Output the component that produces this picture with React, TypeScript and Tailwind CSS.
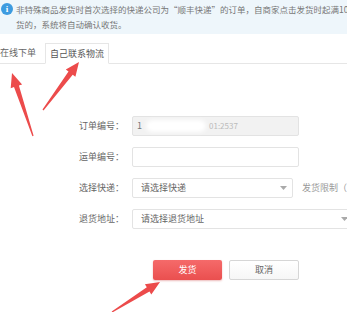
const FONT = { fontFamily: '"Noto Sans CJK SC", "Noto Sans", sans-serif' };

// tapered annotation arrow: thin at the tail, wide head at the tip
function Arrow({ from, to }: { from: [number, number]; to: [number, number] }) {
  const [x1, y1] = from;
  const [x2, y2] = to;
  const len = Math.hypot(x2 - x1, y2 - y1);
  const ux = (x2 - x1) / len;
  const uy = (y2 - y1) / len;
  const nx = -uy;
  const ny = ux;
  const headLen = 14;
  const bx = x2 - ux * headLen;
  const by = y2 - uy * headLen;
  const p = (x: number, y: number) => `${x.toFixed(1)},${y.toFixed(1)}`;
  const pts = [
    p(x1 + nx * 0.6, y1 + ny * 0.6),
    p(bx + nx * 2.6, by + ny * 2.6),
    p(bx + nx * 6, by + ny * 6),
    p(x2, y2),
    p(bx - nx * 6, by - ny * 6),
    p(bx - nx * 2.6, by - ny * 2.6),
    p(x1 - nx * 0.6, y1 - ny * 0.6),
  ].join(' ');
  return <polygon points={pts} fill="#ec4b4b" />;
}

function Caret() {
  return (
    <svg width="7" height="4" viewBox="0 0 7 4" className="shrink-0">
      <path d="M0 0h7L3.5 4z" fill="#aaa" />
    </svg>
  );
}

const LABEL = 'w-[125px] shrink-0 text-right pr-[1px] text-[9px] text-[#666]';
const BOX = 'h-[20px] border border-[#e3e3e3] rounded-[2px] flex items-center text-[9px]';

export default function App() {
  return (
    <div className="relative w-[347px] h-[312px] overflow-hidden bg-white" style={FONT}>
      {/* notice */}
      <div className="h-[34px] bg-[#eef6fb] flex pt-[2px] pl-[1px] overflow-hidden">
        <div className="w-[12px] h-[12px] rounded-full bg-[#3d9be0] text-white text-[9px] font-bold leading-[12px] text-center shrink-0 mt-[1px]" style={{ fontFamily: '"Liberation Serif", serif' }}>
          i
        </div>
        <div className="pl-[3px] text-[8.5px] leading-[15px] text-[#777] whitespace-nowrap">
          <div>非特殊商品发货时首次选择的快递公司为“顺丰快递”的订单，自商家点击发货时起满10天</div>
          <div>货的，系统将自动确认收货。</div>
        </div>
      </div>

      {/* tabs */}
      <div className="mt-[9px] flex h-[21px] border-b border-[#e6e6e6]">
        <div className="w-[45px] text-[9px] leading-[20px] text-[#666]">在线下单</div>
        <div className="w-[64px] -mb-px bg-white border border-[#e6e6e6] border-b-white text-[9px] leading-[20px] text-[#555] text-center">
          自己联系物流
        </div>
      </div>

      {/* form */}
      <div className="mt-[52px] flex flex-col gap-[11px]">
        <div className="flex items-center">
          <div className={LABEL}>订单编号：</div>
          <div className={`${BOX} ml-[7px] w-[167px] bg-[#f2f2f2] pl-[4px] text-[#777]`}>
            <span>1</span>
            <span className="ml-[4px] w-[60px] h-[12px] rounded-full bg-white blur-[2px]" />
            <span className="ml-[3px] text-[#bbb] text-[8px]">01:2537</span>
          </div>
        </div>
        <div className="flex items-center">
          <div className={LABEL}>运单编号：</div>
          <div className={`${BOX} ml-[7px] w-[167px] bg-white`} />
        </div>
        <div className="flex items-center">
          <div className={LABEL}>选择快递：</div>
          <div className={`${BOX} ml-[7px] w-[167px] bg-white pl-[8px] pr-[5px] justify-between text-[#666]`}>
            <span>请选择快递</span>
            <Caret />
          </div>
          <span className="ml-[9px] text-[9px] text-[#999] whitespace-nowrap">发货限制（</span>
        </div>
        <div className="flex items-center">
          <div className={LABEL}>退货地址：</div>
          <div className={`${BOX} ml-[7px] w-[222px] shrink-0 bg-white pl-[8px] pr-[5px] justify-between text-[#666]`}>
            <span>请选择退货地址</span>
            <Caret />
          </div>
        </div>
      </div>

      {/* buttons */}
      <div className="mt-[31px] flex gap-[7px] pl-[153px]">
        <button className="w-[69px] h-[20px] rounded-[2px] bg-gradient-to-b from-[#f56a6a] to-[#ea4f4f] shadow-[0_1px_2px_rgba(200,60,60,0.35)] text-white text-[9px]">
          发货
        </button>
        <button className="w-[70px] h-[20px] rounded-[2px] border border-[#d6d6d6] bg-gradient-to-b from-white to-[#f6f6f6] text-[#666] text-[9px]">
          取消
        </button>
      </div>

      {/* annotation arrows */}
      <svg className="absolute inset-0 pointer-events-none" width="347" height="312">
        <Arrow from={[33, 136]} to={[12, 73]} />
        <Arrow from={[43, 110]} to={[79, 62]} />
        <Arrow from={[112, 312]} to={[160, 282]} />
      </svg>
    </div>
  );
}
